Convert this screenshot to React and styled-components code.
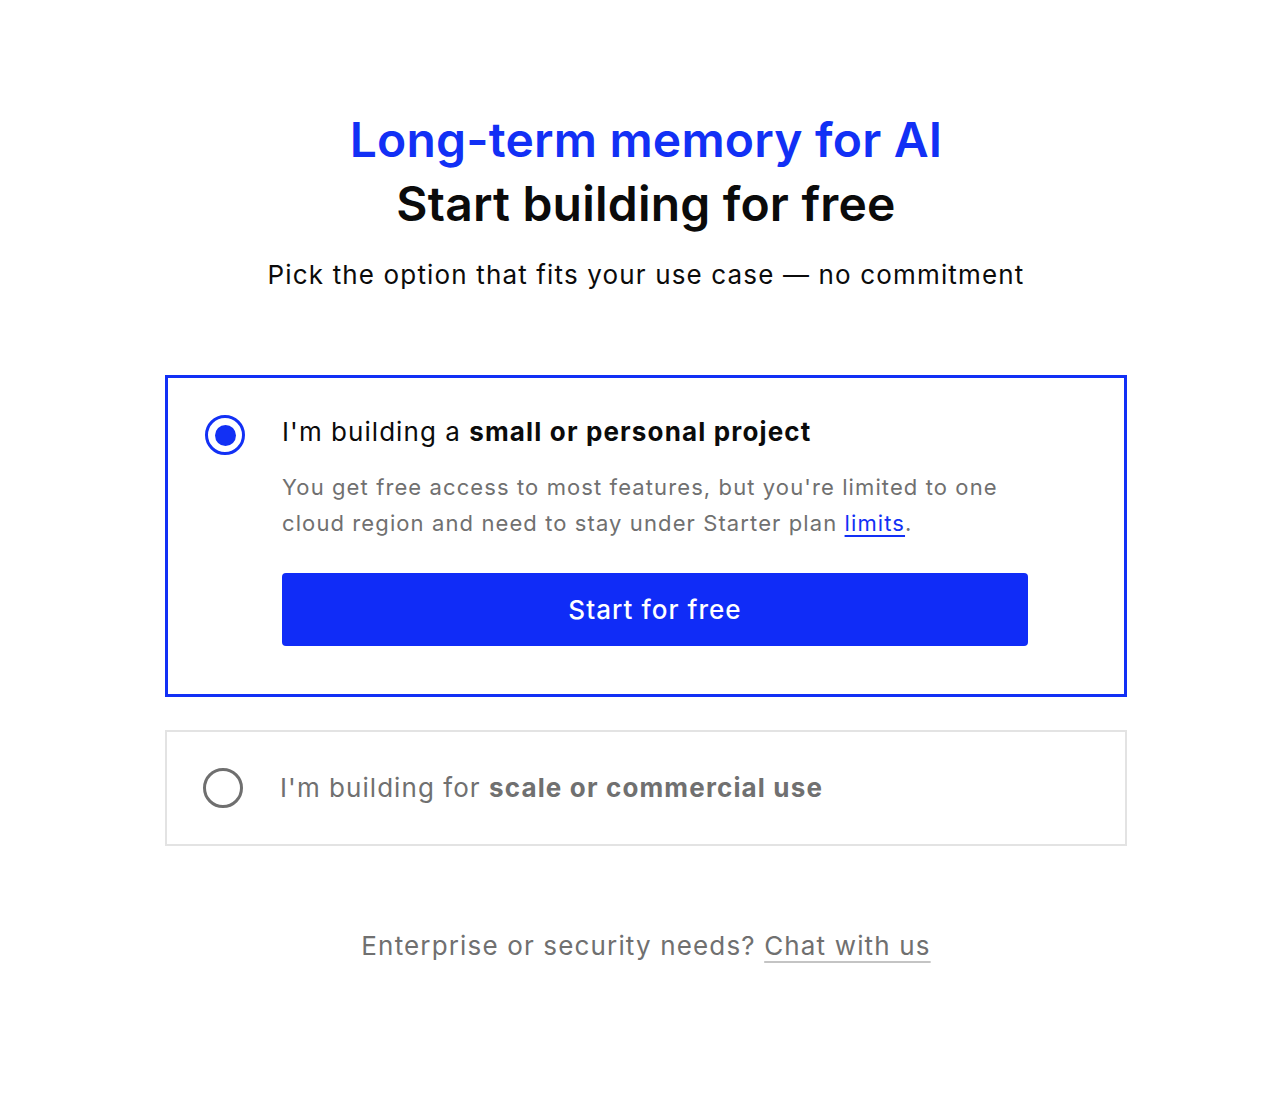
import React, { useState } from 'react';
import styled, { createGlobalStyle } from 'styled-components';

const Global = createGlobalStyle`
  html, body {
    margin: 0;
    padding: 0;
    background: #ffffff;
  }
  body {
    font-family: Inter, "Noto Sans", "Liberation Sans", sans-serif;
    color: #0b0b0b;
    -webkit-font-smoothing: antialiased;
  }
`;

const Page = styled.main`
  min-height: 1094px;
  box-sizing: border-box;
  padding: 108px 0 0 12px;
  display: flex;
  flex-direction: column;
  align-items: center;
`;

const Title = styled.h1`
  margin: 0;
  font-size: 48px;
  line-height: 64px;
  font-weight: 600;
  text-align: center;
  letter-spacing: 0.2px;
  color: #0b0b0b;
`;

const Accent = styled.span`
  display: block;
  color: #1230f5;
`;

const Lead = styled.p`
  margin: 21px 0 0;
  font-size: 26px;
  line-height: 36px;
  font-weight: 400;
  text-align: center;
  letter-spacing: 1.15px;
  color: #0b0b0b;
`;

const Options = styled.div`
  width: 962px;
  margin-top: 82px;
  display: flex;
  flex-direction: column;
  gap: 33px;
`;

const Card = styled.div`
  box-sizing: border-box;
  display: grid;
  grid-template-columns: 40px 1fr;
  column-gap: 37px;
  align-items: ${p => (p.$active ? 'start' : 'center')};
  padding: ${p => (p.$active ? '37px 96px 48px 37px' : '36px 38px 36px 36px')};
  border: ${p => (p.$active ? '3px solid #1230f5' : '2px solid #e3e3e3')};
  cursor: pointer;
`;

const Radio = styled.span`
  box-sizing: border-box;
  width: 40px;
  height: 40px;
  border-radius: 50%;
  border: 3px solid ${p => (p.$checked ? '#1230f5' : '#6f6f6f')};
  display: flex;
  align-items: center;
  justify-content: center;
  &::after {
    content: '';
    display: ${p => (p.$checked ? 'block' : 'none')};
    width: 21px;
    height: 21px;
    border-radius: 50%;
    background: #1230f5;
  }
`;

const Body = styled.div`
  display: flex;
  flex-direction: column;
`;

const Label = styled.div`
  font-size: 26px;
  line-height: 34px;
  letter-spacing: 1.05px;
  color: ${p => (p.$muted ? '#707070' : '#0b0b0b')};
  b {
    font-weight: 700;
    letter-spacing: 1.15px;
  }
`;

const Desc = styled.p`
  margin: 20px 0 0;
  font-size: 22px;
  line-height: 36px;
  letter-spacing: 1.1px;
  color: #707070;
  a {
    color: #1230f5;
    text-decoration: underline;
    text-underline-offset: 4px;
  }
`;

const Button = styled.button`
  margin-top: 32px;
  height: 73px;
  width: 746px;
  border: 0;
  border-radius: 4px;
  background: #102cf7;
  color: #ffffff;
  font-family: inherit;
  font-size: 26px;
  font-weight: 500;
  letter-spacing: 1.05px;
  cursor: pointer;
`;

const Footer = styled.p`
  margin: 82px 0 0;
  font-size: 26px;
  line-height: 36px;
  letter-spacing: 1.15px;
  color: #707070;
  text-align: center;
  a {
    color: #707070;
    text-decoration: underline;
    text-decoration-color: #c4c4c4;
    text-decoration-thickness: 2px;
    text-underline-offset: 6px;
  }
`;

export default function App() {
  const [choice, setChoice] = useState('personal');

  return (
    <>
      <Global />
      <Page>
        <Title>
          <Accent>Long-term memory for AI</Accent>
          Start building for free
        </Title>
        <Lead>Pick the option that fits your use case — no commitment</Lead>

        <Options>
          <Card $active={choice === 'personal'} onClick={() => setChoice('personal')}>
            <Radio $checked={choice === 'personal'} />
            <Body>
              <Label $muted={choice !== 'personal'}>
                I'm building a <b>small or personal project</b>
              </Label>
              {choice === 'personal' && (
                <>
                  <Desc>
                    You get free access to most features, but you're limited to one cloud
                    region and need to stay under Starter plan <a href="#limits">limits</a>.
                  </Desc>
                  <Button>Start for free</Button>
                </>
              )}
            </Body>
          </Card>

          <Card $active={choice === 'scale'} onClick={() => setChoice('scale')}>
            <Radio $checked={choice === 'scale'} />
            <Body>
              <Label $muted={choice !== 'scale'}>
                I'm building for <b>scale or commercial use</b>
              </Label>
            </Body>
          </Card>
        </Options>

        <Footer>
          Enterprise or security needs? <a href="#contact">Chat with us</a>
        </Footer>
      </Page>
    </>
  );
}
